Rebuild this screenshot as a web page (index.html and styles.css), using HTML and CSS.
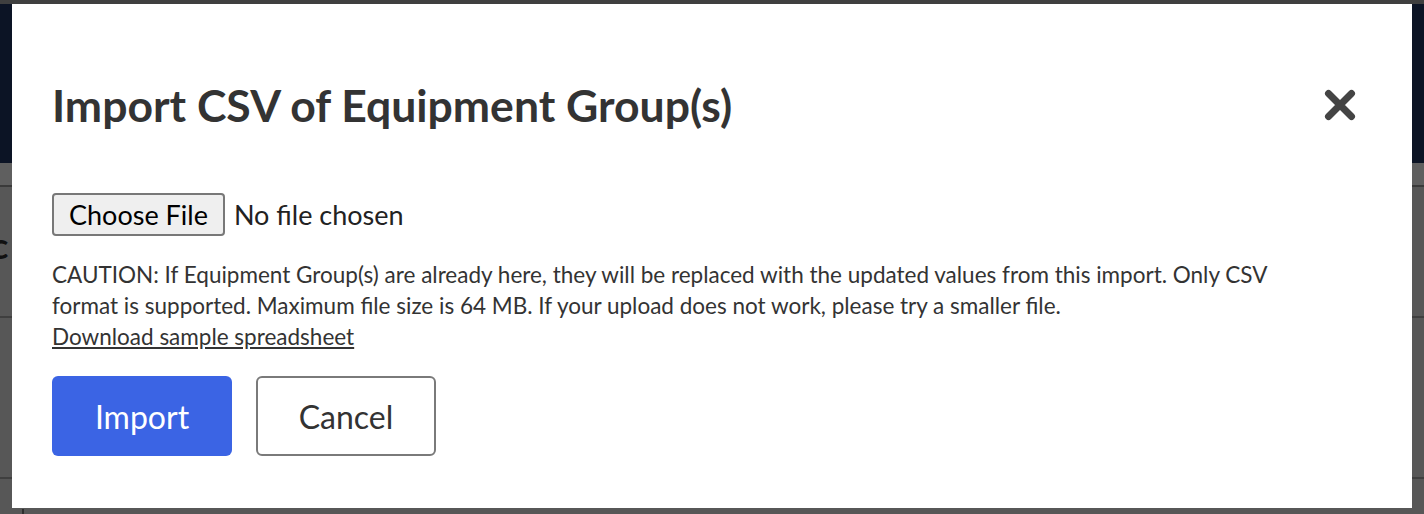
FILE: index.html
```html
<!DOCTYPE html>
<html lang="en">
<head>
<meta charset="utf-8">
<title>Import CSV</title>
<link rel="stylesheet" href="styles.css">
</head>
<body>
<div class="page">
  <div class="topbar"></div>
  <div class="subbar"></div>
  <div class="row row-a"><span class="peek">c</span></div>
  <div class="row row-b"></div>
  <div class="row row-c"><span class="col-line"></span></div>
</div>
<div class="overlay">
  <div class="modal" role="dialog" aria-labelledby="mtitle">
    <div class="modal-head">
      <h1 id="mtitle" class="modal-title">Import CSV of Equipment Group(s)</h1>
      <button class="close" aria-label="Close">
        <svg width="32" height="32" viewBox="0 0 32 32"><path d="M4.5 4.5 L27.5 27.5 M27.5 4.5 L4.5 27.5" stroke="#444" stroke-width="7" stroke-linecap="round" fill="none"/></svg>
      </button>
    </div>
    <div class="file-row">
      <span class="file-btn">Choose File</span>
      <span class="file-name">No file chosen</span>
    </div>
    <p class="caution">CAUTION: If Equipment Group(s) are already here, they will be replaced with the updated values from this import. Only CSV format is supported. Maximum file size is 64 MB. If your upload does not work, please try a smaller file.<br><a href="#" class="sample">Download sample spreadsheet</a></p>
    <div class="actions">
      <button class="btn btn-primary">Import</button>
      <button class="btn btn-secondary">Cancel</button>
    </div>
  </div>
</div>
</body>
</html>
```

FILE: styles.css
```css
* { box-sizing: border-box; }
html, body { margin: 0; padding: 0; }
body {
  width: 1424px;
  height: 514px;
  overflow: hidden;
  background: #575757;
  font-family: Lato, "Liberation Sans", sans-serif;
  position: relative;
}
.page { display: flex; flex-direction: column; }
.topbar { height: 163px; background: #0c1425; border-top: 4px solid #3f3f3f; }
.subbar { height: 24px; background: #5f5f5f; border-bottom: 2px solid #3a3a3a; }
.row { border-bottom: 2px solid #3f3f3f; }
.row-a { height: 131px; position: relative; }
.peek { position: absolute; left: -9px; top: 36px; font-size: 36px; font-weight: 700; color: #111; }
.row-b { height: 161px; }
.row-c { height: 40px; border-bottom: none; position: relative; }
.col-line { position: absolute; left: 22px; top: 30px; width: 2px; height: 10px; background: #2e2e2e; }

.overlay {
  position: absolute;
  inset: 0;
  display: flex;
  padding: 4px 12px 6px 12px;
}
.modal {
  flex: 1;
  background: #fff;
  padding: 0 40px;
}
.modal-head {
  display: flex;
  justify-content: space-between;
  align-items: center;
  height: 189px;
  padding-top: 13px;
}
.modal-title {
  margin: 0;
  font-size: 44.5px;
  font-weight: 700;
  color: #333;
  line-height: 1.2;
}
.close {
  background: none;
  border: none;
  padding: 0;
  margin-right: 16px;
  width: 32px;
  height: 32px;
  display: flex;
}
.file-row {
  display: flex;
  align-items: center;
  gap: 9px;
  height: 43px;
}
.file-btn {
  height: 43px;
  padding: 0 15px;
  display: flex;
  align-items: center;
  background: #efefef;
  border: 2px solid #787878;
  border-radius: 4px;
  font-size: 27px;
  color: #000;
}
.file-name { font-size: 27px; color: #222; }
.caution {
  margin: 23px 0 0 0;
  max-width: 1260px;
  font-size: 22.5px;
  line-height: 31px;
  color: #333;
}
.sample { color: #333; text-decoration: underline; }
.actions {
  display: flex;
  gap: 24px;
  margin-top: 24px;
}
.btn {
  width: 180px;
  height: 80px;
  border-radius: 6px;
  font-family: Lato, "Liberation Sans", sans-serif;
  font-size: 32px;
}
.btn-primary { background: #3b64e4; color: #fff; border: none; }
.btn-secondary { background: #fff; color: #333; border: 2px solid #7a7a7a; }
```
